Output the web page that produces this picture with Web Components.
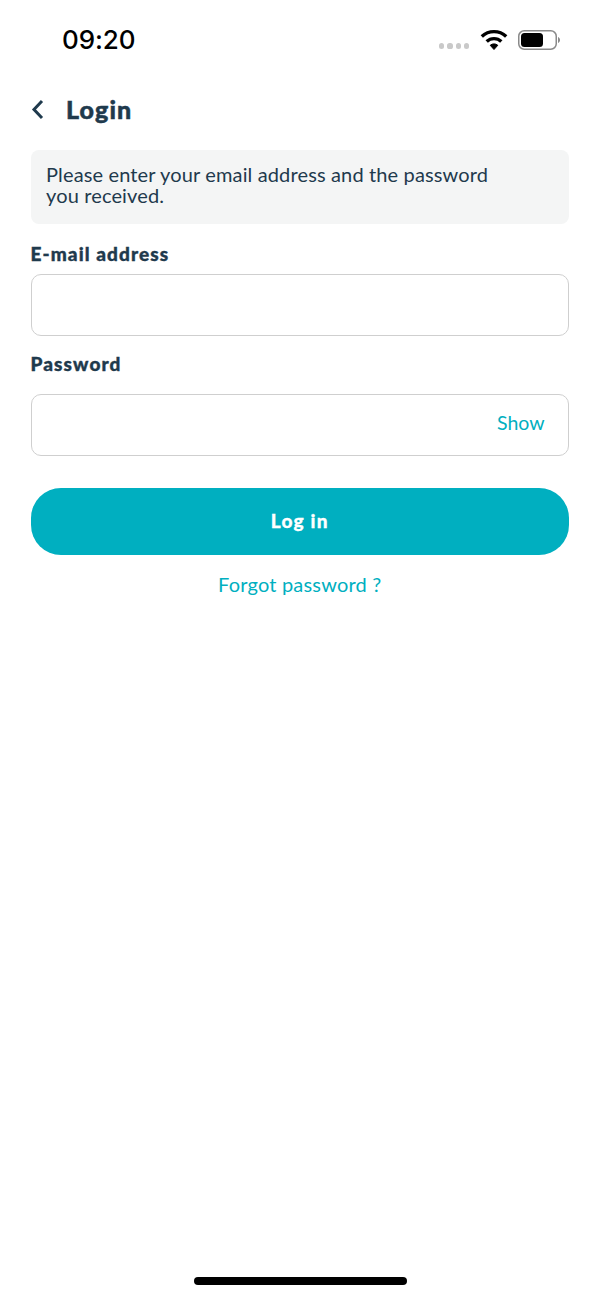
<!doctype html>
<html lang="en"><head><meta charset="utf-8"><title>Login</title>
<style>
html,body{margin:0;padding:0;background:#fff}
body{font-family:Lato,"Noto Sans",sans-serif;color:#1f3a4d}
</style></head><body>
<app-screen>
  <status-bar></status-bar>
  <page-header>Login</page-header>
  <main-form>
    <info-note>Please enter your email address and the password<br>you received.</info-note>
    <text-field label="E-mail address"></text-field>
    <text-field class="second" label="Password" action="Show"></text-field>
    <primary-button>Log in</primary-button>
    <link-text>Forgot password ?</link-text>
  </main-form>
  <home-bar></home-bar>
</app-screen>
<script>
function def(name, html){
  customElements.define(name, class extends HTMLElement{
    constructor(){super();this.attachShadow({mode:'open'}).innerHTML=html;}
  });
}
def('app-screen',`<style>:host{display:flex;flex-direction:column;width:600px;height:1298px;overflow:hidden;background:#fff}
::slotted(main-form){flex:1}</style><slot></slot>`);
def('status-bar',`<style>:host{display:flex;align-items:center;justify-content:space-between;box-sizing:border-box;height:80px;padding:0 39px 0 62px}
.t{font:500 26px/1 Inter,"Liberation Sans",sans-serif;color:#000;letter-spacing:-.1px}
.r{display:flex;align-items:center}
.d{display:flex;gap:3px;margin-right:11px;margin-top:12px}.d i{width:5.250px;height:5.250px;border-radius:50%;background:#c9c9c9}
svg{display:block}</style>
<span class="t">09:20</span>
<div class="r"><div class="d"><i></i><i></i><i></i><i></i></div>
<svg width="28" height="22" viewBox="0 0 28 22" style="margin-right:10px"><path d="M14 20.500l-3.800-4.200c2.100-1.900 5.500-1.900 7.600 0z" fill="#000" stroke="#000" stroke-linejoin="round"/><path d="M6.700 12.500C10.800 8.600 17.200 8.600 21.300 12.500" fill="none" stroke="#000" stroke-width="3.400"/><path d="M1.800 7.500C8.700 1 19.300 1 26.200 7.500" fill="none" stroke="#000" stroke-width="3.400"/></svg>
<svg width="43" height="20" viewBox="0 0 43 20"><rect x=".75" y=".75" width="37.500" height="18.500" rx="5.500" fill="none" stroke="#8a8a8a" stroke-width="1.500"/><rect x="3" y="3" width="22" height="14" rx="3.500" fill="#000"/><path d="M40 7v6c1.300-.6 2-1.700 2-3s-.7-2.400-2-3z" fill="#8a8a8a"/></svg>
</div>`);
def('page-header',`<style>:host{display:flex;align-items:center;box-sizing:border-box;height:60px;padding:0 0 2px 31px;gap:20px}
svg{display:block}.t{font:900 25px/30px Lato,sans-serif;color:#1f3a4d;letter-spacing:1.100px;-webkit-text-stroke:.5px #1f3a4d}</style>
<svg width="15" height="21" viewBox="0 0 15 21"><path d="M11 2L3 10.500 11 19" fill="none" stroke="#1f3a4d" stroke-width="3"/></svg>
<span class="t"><slot></slot></span>`);
def('main-form',`<style>:host{display:flex;flex-direction:column;padding:10px 31px 0 30.500px}</style><slot></slot>`);
def('info-note',`<style>:host{display:block;box-sizing:border-box;height:74px;padding:14px 15.500px;background:#f4f5f5;border-radius:8px;font:400 20px/21px Lato,sans-serif;color:#1f3a4d;white-space:nowrap;letter-spacing:.14px}</style><slot></slot>`);
customElements.define('text-field',class extends HTMLElement{constructor(){super();const a=this.getAttribute('action');
this.attachShadow({mode:'open'}).innerHTML=`<style>:host{display:block;margin-top:17px}
:host(.second){margin-top:15px}
.l{font:900 19px/26px Lato,sans-serif;color:#1f3a4d;display:block;margin-bottom:7px;letter-spacing:1.100px;-webkit-text-stroke:.4px #1f3a4d}
:host(.second) .l{margin-bottom:17px}
.b{display:flex;align-items:center;justify-content:flex-end;box-sizing:border-box;height:62px;border:1.500px solid #cfcfcf;border-radius:10px;padding:0 23.500px 4px;background:#fff}
.a{font:400 19.500px/1 Lato,sans-serif;color:#00afc0}</style>
<span class="l">${this.getAttribute('label')}</span><div class="b">${a?`<span class="a">${a}</span>`:''}</div>`;}});
def('primary-button',`<style>:host{display:flex;align-items:center;justify-content:center;box-sizing:border-box;padding-bottom:2px;height:67px;margin-top:32px;border-radius:30px;background:#00afc0;color:#fff;font:900 19px/1 Lato,sans-serif;letter-spacing:1.200px;-webkit-text-stroke:.3px #fff}</style><slot></slot>`);
def('link-text',`<style>:host{display:block;text-align:center;margin-top:16px;font:400 20px/26px Lato,sans-serif;color:#00afc0;letter-spacing:.2px}</style><slot></slot>`);
def('home-bar',`<style>:host{display:flex;justify-content:center;padding-bottom:13px}i{display:block;width:213px;height:8px;border-radius:4px;background:#000}</style><i></i>`);
</script>
</body></html>
